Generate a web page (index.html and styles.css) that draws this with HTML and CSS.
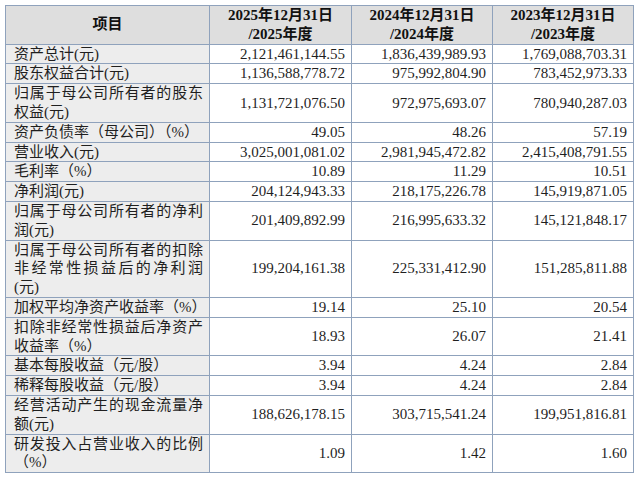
FILE: index.html
```html
<!DOCTYPE html>
<html lang="zh">
<head>
<meta charset="utf-8">
<link rel="stylesheet" href="styles.css">
</head>
<body>
<table class="fin">
<colgroup><col class="c1"><col class="c2"><col class="c3"><col class="c4"></colgroup>
<thead>
<tr><th class="item">项目</th><th>2025年12月31日<br>/2025年度</th><th>2024年12月31日<br>/2024年度</th><th>2023年12月31日<br>/2023年度</th></tr>
</thead>
<tbody>
<tr><td class="name">资产总计(元)</td><td>2,121,461,144.55</td><td>1,836,439,989.93</td><td>1,769,088,703.31</td></tr>
<tr><td class="name">股东权益合计(元)</td><td>1,136,588,778.72</td><td>975,992,804.90</td><td>783,452,973.33</td></tr>
<tr><td class="name">归属于母公司所有者的股东权益(元)</td><td>1,131,721,076.50</td><td>972,975,693.07</td><td>780,940,287.03</td></tr>
<tr><td class="name">资产负债率（母公司）（%）</td><td>49.05</td><td>48.26</td><td>57.19</td></tr>
<tr><td class="name">营业收入(元)</td><td>3,025,001,081.02</td><td>2,981,945,472.82</td><td>2,415,408,791.55</td></tr>
<tr><td class="name">毛利率（%）</td><td>10.89</td><td>11.29</td><td>10.51</td></tr>
<tr><td class="name">净利润(元)</td><td>204,124,943.33</td><td>218,175,226.78</td><td>145,919,871.05</td></tr>
<tr><td class="name">归属于母公司所有者的净利润(元)</td><td>201,409,892.99</td><td>216,995,633.32</td><td>145,121,848.17</td></tr>
<tr><td class="name">归属于母公司所有者的扣除非经常性损益后的净利润(元)</td><td>199,204,161.38</td><td>225,331,412.90</td><td>151,285,811.88</td></tr>
<tr><td class="name">加权平均净资产收益率（%）</td><td>19.14</td><td>25.10</td><td>20.54</td></tr>
<tr><td class="name">扣除非经常性损益后净资产收益率（%）</td><td>18.93</td><td>26.07</td><td>21.41</td></tr>
<tr><td class="name">基本每股收益（元/股）</td><td>3.94</td><td>4.24</td><td>2.84</td></tr>
<tr><td class="name">稀释每股收益（元/股）</td><td>3.94</td><td>4.24</td><td>2.84</td></tr>
<tr><td class="name">经营活动产生的现金流量净额(元)</td><td>188,626,178.15</td><td>303,715,541.24</td><td>199,951,816.81</td></tr>
<tr><td class="name">研发投入占营业收入的比例（%）</td><td>1.09</td><td>1.42</td><td>1.60</td></tr>
</tbody>
</table>
</body>
</html>
```

FILE: styles.css
```css
html, body {
  margin: 0;
  padding: 0;
  background: #ffffff;
}
body {
  padding: 5px 0 0 5px;
  font-family: "Liberation Serif", "Noto Sans CJK SC", serif;
  color: #1f1f1f;
}
.fin {
  border-collapse: collapse;
  table-layout: fixed;
  width: 628px;
  font-size: 15px;
  line-height: 18.8px;
}
.c1 { width: 204px; }
.c2 { width: 142px; }
.c3 { width: 141px; }
.c4 { width: 141px; }
.fin th, .fin td {
  border: 1px solid #8fa2bc;
  padding: 0 6px 0 8px;
  vertical-align: middle;
}
.fin th {
  background: #dedede;
  font-weight: bold;
  text-align: center;
  padding: 0;
  color: #111111;
}
.fin td {
  text-align: right;
  background: #ffffff;
}
.fin td.name {
  background: #ededed;
  text-align: justify;
  text-align-last: left;
  padding: 0 6px 0 8px;
}
```
